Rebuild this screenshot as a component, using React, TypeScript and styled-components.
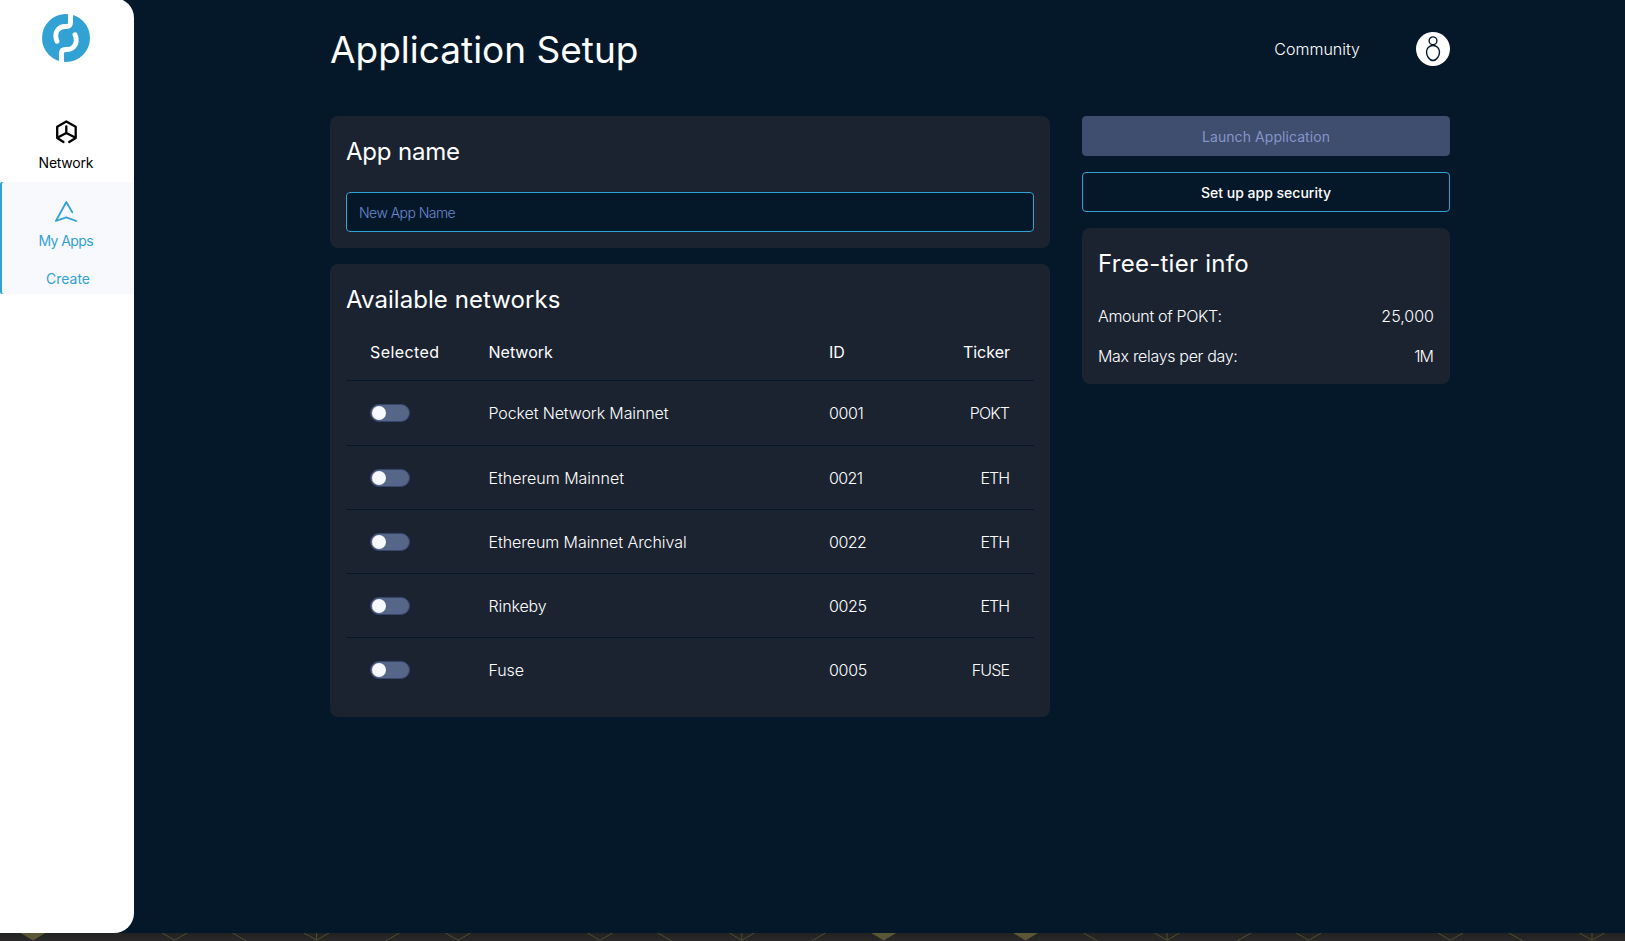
import React from "react";
import styled, { createGlobalStyle } from "styled-components";

const Global = createGlobalStyle`
  * { box-sizing: border-box; }
  html, body, #root { margin: 0; height: 100%; }
  body { background: #262626; color: #fff; font-family: Inter, "Liberation Sans", sans-serif; overflow: hidden; }
  h1, h2 { margin: 0; font-weight: 400; }
`;

const Page = styled.div`
  height: 941px;
  display: flex;
  flex-direction: column;
  background: #262626;
`;
const Shell = styled.div`
  height: 933px;
  flex: none;
  display: flex;
  background: #051829;
`;
const Sidebar = styled.nav`
  width: 134px;
  flex: none;
  margin-top: -2px;
  background: #fff;
  border-radius: 0 20px 20px 0;
  display: flex;
  flex-direction: column;
  align-items: stretch;
  padding-top: 16px;
`;
const LogoBox = styled.div`
  height: 48px;
  padding-left: 42px;
  margin-bottom: 57px;
  svg { display: block; }
`;
const NavItem = styled.a<{ $active?: boolean }>`
  display: flex;
  flex-direction: column;
  align-items: center;
  height: ${(p) => (p.$active ? 77 : 63)}px;
  padding: ${(p) => (p.$active ? 18 : 0)}px 2px 0 0;
  font-size: 14px;
  line-height: 18px;
  color: ${(p) => (p.$active ? "#32a2d4" : "#000")};
  svg { display: block; margin-bottom: ${(p) => (p.$active ? 6 : 9)}px; }
`;
const ActiveGroup = styled.div`
  height: 112px;
  background: #f8f9fc;
  border-radius: 2px 0 0 2px;
  box-shadow: inset 2px 0 #32a2d4;
`;
const SubItem = styled.a`
  display: block;
  padding: 11px 0 0 2px;
  text-align: center;
  font-size: 14px;
  line-height: 18px;
  color: #32a2d4;
`;
const Main = styled.main`
  width: 1120px;
  margin-left: 196px;
`;
const Header = styled.header`
  height: 116px;
  padding-bottom: 18px;
  display: flex;
  align-items: center;
`;
const Txt = styled.span<{ $ls?: number }>`
  letter-spacing: ${(p) => p.$ls ?? 0}px;
  margin-right: ${(p) => -(p.$ls ?? 0)}px;
  white-space: nowrap;
`;
const Title = styled.h1`
  flex: 1;
  padding-top: 2px;
  font-size: 37px;
  line-height: 48px;
`;
const Community = styled.a`
  font-size: 16px;
  font-weight: 300;
  margin-right: 56px;
`;
const Avatar = styled.div`
  width: 34px;
  height: 34px;
  svg { display: block; }
`;
const Columns = styled.div`
  display: flex;
  gap: 32px;
  align-items: flex-start;
`;
const Left = styled.div`
  width: 720px;
  display: flex;
  flex-direction: column;
  gap: 16px;
`;
const Right = styled.div`
  width: 368px;
  display: flex;
  flex-direction: column;
  gap: 16px;
`;
const Card = styled.section<{ $h: number }>`
  height: ${(p) => p.$h}px;
  background: #1b2331;
  border-radius: 8px;
  padding: 16px;
`;
const CardTitle = styled.h2`
  height: 38px;
  font-size: 24px;
  line-height: 40px;
`;
const Field = styled.div`
  height: 40px;
  margin-top: 22px;
  border: 1px solid #32a2d4;
  border-radius: 4px;
  background: #051829;
  padding: 0 12px;
  line-height: 40px;
  font-size: 14px;
  font-weight: 300;
  color: #6b87cf;
`;
const Button = styled.button<{ $disabled?: boolean }>`
  height: 40px;
  padding: 2px 0 0;
  border: 1px solid ${(p) => (p.$disabled ? "#3f4d6f" : "#32a2d4")};
  border-radius: 4px;
  background: ${(p) => (p.$disabled ? "#3f4d6f" : "#051829")};
  color: ${(p) => (p.$disabled ? "#8496c8" : "#fff")};
  font: ${(p) => (p.$disabled ? 400 : 500)} 14px/36px Inter, sans-serif;
`;
const Info = styled.div`
  margin-top: 14px;
`;
const InfoRow = styled.div`
  height: 40px;
  display: flex;
  justify-content: space-between;
  line-height: 40px;
  font-size: 16px;
  font-weight: 300;
`;
const Row = styled.div<{ $head?: boolean; $h: number; $last?: boolean }>`
  height: ${(p) => p.$h}px;
  display: grid;
  grid-template-columns: 118.5px 340.5px 1fr auto;
  align-items: center;
  padding: ${(p) => (p.$head ? "6px" : "0")} 24px 0;
  font-size: 16px;
  font-weight: ${(p) => (p.$head ? 400 : 300)};
  border-bottom: ${(p) => (p.$last ? "0" : "1px solid #051829")};
`;
const Toggle = styled.span`
  width: 40px;
  height: 18px;
  border-radius: 9px;
  border: 1px solid #36456b;
  background: #566689;
  display: flex;
  align-items: center;
  &::before { content: ""; width: 14px; height: 14px; border-radius: 50%; background: #f8f9fc; margin-left: 1px; }
`;
const Strip = styled.svg`
  display: block;
  flex: none;
`;

const NETWORKS = [
  { name: "Pocket Network Mainnet", id: "0001", ticker: "POKT", h: 65, ls: [-0.12, -0.4, -0.85] },
  { name: "Ethereum Mainnet", id: "0021", ticker: "ETH", h: 64, ls: [0, -0.6, -1] },
  { name: "Ethereum Mainnet Archival", id: "0022", ticker: "ETH", h: 64, ls: [-0.06, -0.5, -1] },
  { name: "Rinkeby", id: "0025", ticker: "ETH", h: 64, ls: [-0.12, -0.4, -1] },
  { name: "Fuse", id: "0005", ticker: "FUSE", h: 63, ls: [-0.1, -0.3, -0.85] },
];

const Logo = () => (
  <svg width="48" height="48" viewBox="0 0 48 48" fill="none">
    <circle cx="24" cy="24" r="24" fill="#32a2d4" />
    <g stroke="#fff" strokeWidth="4.900" strokeLinecap="round">
      <path d="M28.500 -3V8.500Q28.500 12.500 24.500 12.500H23C17.500 12.500 13.800 16.500 13.800 21.500Q13.800 25 15 27.300" />
      <path d="M19.500 51V39.500Q19.500 35.500 23.500 35.500H25C30.500 35.500 34.200 31.500 34.200 26.500Q34.200 23 33 20.700" />
    </g>
  </svg>
);
const NetworkIcon = () => (
  <svg width="24" height="26" viewBox="0 0 24 26" fill="none" stroke="#000" strokeWidth="2.3" strokeLinecap="round" strokeLinejoin="round">
    <path d="M9.500 23L3.200 19V7.700L12.300 2.500L21.700 7.700V19L15.200 23" />
    <path d="M12.300 7.500V14M12.300 14L3.700 18.500M12.300 14L21.200 18.500" />
  </svg>
);
const AppsIcon = () => (
  <svg width="24" height="26" viewBox="0 0 24 26" fill="none" stroke="#32a2d4" strokeWidth="1.8" strokeLinecap="round" strokeLinejoin="round">
    <path d="M18.300 12.300L12.300 2L1.900 21L12.300 17.300L22.300 21" />
  </svg>
);

/* Horizontal positions of the shapes in the patterned footer band */
const FILLED = [33, 883.7, 1025.5];
const CHEVRONS = [174.6, 316.5, 458, 600, 741.8, 1167, 1308.7, 1450.5, 1592];
const STEMS = [316.5, 741.8, 1167, 1592];
const FALLING = [232.5, 657.8, 1083.5, 1509];
const RISING = [399.5, 825.5, 1251];

const Pattern = () => (
  <Strip width="1625" height="8" viewBox="0 0 1625 8" fill="none" stroke="#514d30">
    <defs>
      <linearGradient id="shade" x1="0" y1="0" x2="0" y2="1">
        <stop offset="0" stopColor="#222222" />
        <stop offset="1" stopColor="#2a2829" />
      </linearGradient>
    </defs>
    <rect width="1625" height="8" fill="url(#shade)" stroke="none" />
    {FILLED.map((x) => <path key={x} d={`M${x - 12.5} 0h25L${x} 7.600Z`} fill="#5b5635" stroke="none" />)}
    {CHEVRONS.map((x) => <path key={x} d={`M${x - 12.5} 0L${x} 7.200L${x + 12.5} 0`} />)}
    {STEMS.map((x) => <path key={x} d={`M${x} 0V7`} />)}
    {FALLING.map((x) => <path key={x} d={`M${x} 0l14 8`} />)}
    {RISING.map((x) => <path key={x} d={`M${x} 0l-14 8`} />)}
  </Strip>
);

export default function App() {
  return (
    <Page>
      <Global />
      <Shell>
        <Sidebar>
          <LogoBox><Logo /></LogoBox>
          <NavItem><NetworkIcon /><Txt $ls={-0.25}>Network</Txt></NavItem>
          <ActiveGroup>
            <NavItem $active><AppsIcon /><Txt $ls={-0.6}>My Apps</Txt></NavItem>
            <SubItem><Txt>Create</Txt></SubItem>
          </ActiveGroup>
        </Sidebar>
        <Main>
          <Header>
            <Title><Txt>Application Setup</Txt></Title>
            <Community><Txt>Community</Txt></Community>
            <Avatar>
              <svg width="34" height="34" viewBox="0 0 34 34" fill="none" stroke="#051829" strokeWidth="1.4">
                <circle cx="17" cy="17" r="17" fill="#fff" stroke="none" />
                <circle cx="17" cy="8.800" r="3.900" />
                <path d="M17 13.500C21 13.500 23.500 16.500 23.500 20C23.500 24 20.500 28.500 17 28.500S10.500 24 10.500 20C10.500 16.500 13 13.500 17 13.500Z" />
              </svg>
            </Avatar>
          </Header>
          <Columns>
            <Left>
              <Card $h={132}>
                <CardTitle><Txt $ls={-0.2}>App name</Txt></CardTitle>
                <Field><Txt $ls={-0.55}>New App Name</Txt></Field>
              </Card>
              <Card $h={453}>
                <CardTitle><Txt $ls={0.06}>Available networks</Txt></CardTitle>
                <Row $head $h={63}>
                  <Txt $ls={0.42}>Selected</Txt><Txt>Network</Txt><Txt>ID</Txt><Txt>Ticker</Txt>
                </Row>
                {NETWORKS.map((n, i) => (
                  <Row key={n.id} $h={n.h} $last={i === NETWORKS.length - 1}>
                    <Toggle />
                    <Txt $ls={n.ls[0]}>{n.name}</Txt>
                    <Txt $ls={n.ls[1]}>{n.id}</Txt>
                    <Txt $ls={n.ls[2]}>{n.ticker}</Txt>
                  </Row>
                ))}
              </Card>
            </Left>
            <Right>
              <Button $disabled><Txt $ls={0.07}>Launch Application</Txt></Button>
              <Button><Txt>Set up app security</Txt></Button>
              <Card $h={156}>
                <CardTitle><Txt $ls={0.27}>Free-tier info</Txt></CardTitle>
                <Info>
                  <InfoRow><Txt $ls={-0.33}>Amount of POKT:</Txt><Txt>25,000</Txt></InfoRow>
                  <InfoRow><Txt $ls={-0.32}>Max relays per day:</Txt><Txt $ls={-1}>1M</Txt></InfoRow>
                </Info>
              </Card>
            </Right>
          </Columns>
        </Main>
      </Shell>
      <Pattern />
    </Page>
  );
}
